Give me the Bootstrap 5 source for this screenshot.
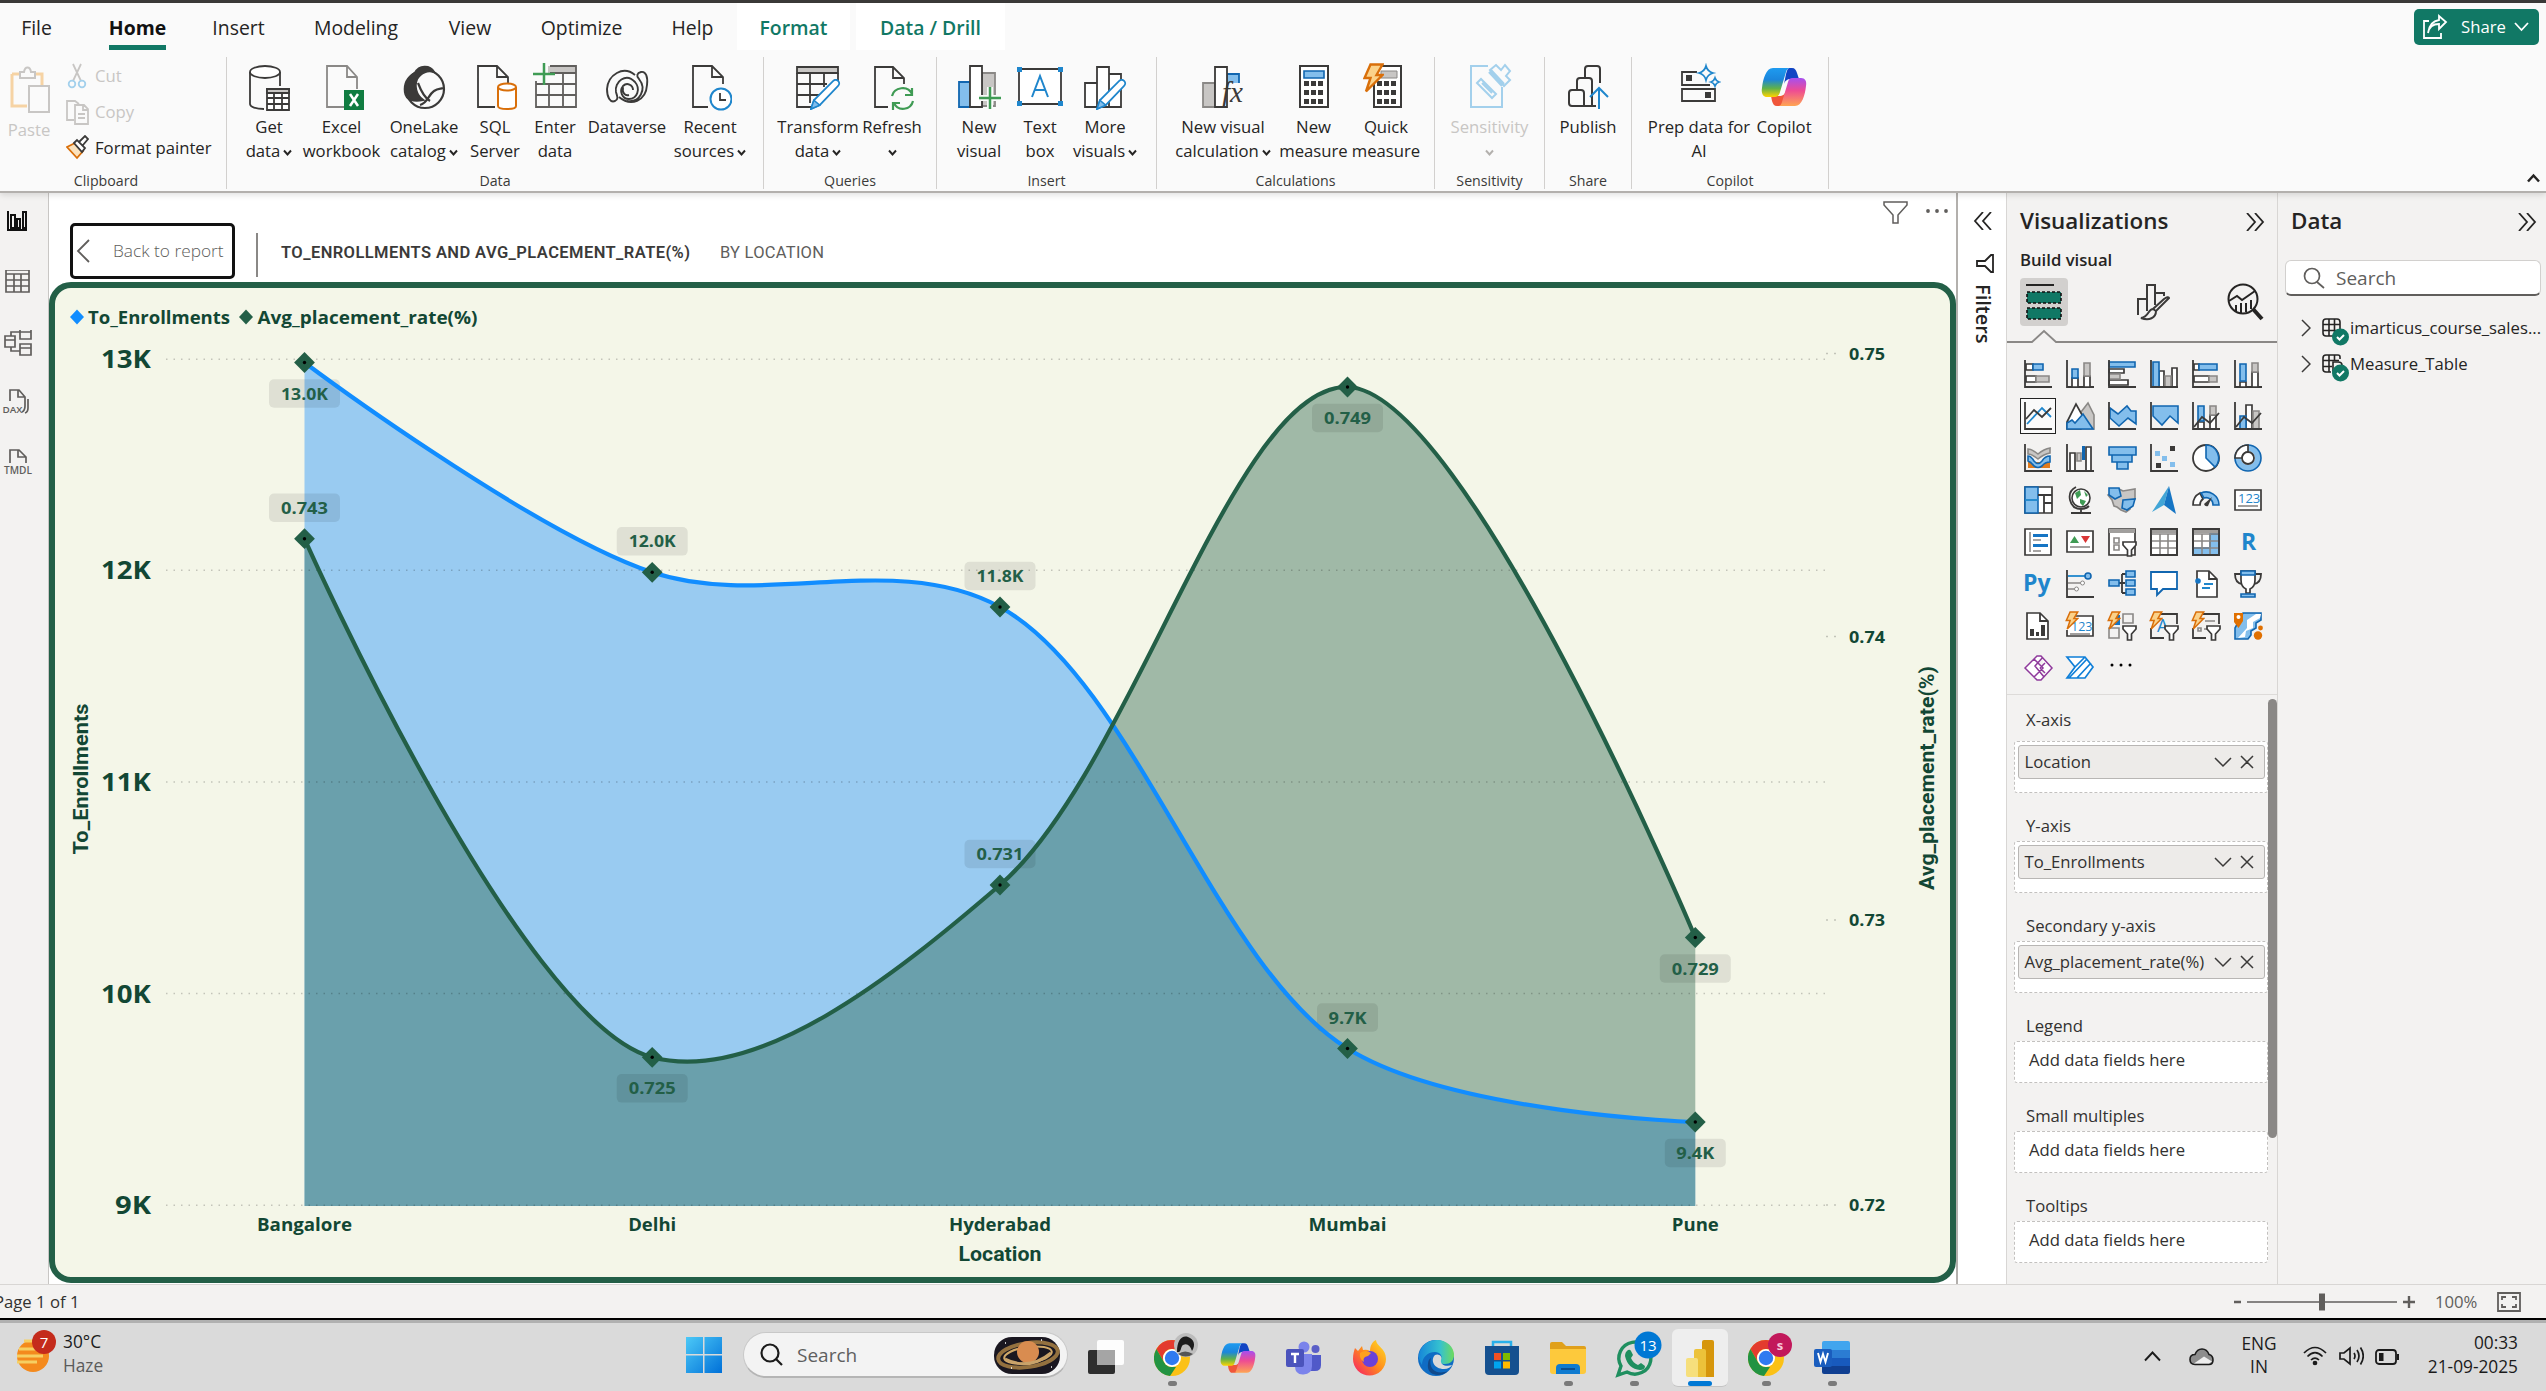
<!DOCTYPE html>
<html lang="en">
<head>
<meta charset="utf-8">
<title>Power BI Desktop</title>
<link href="https://cdn.jsdelivr.net/npm/bootstrap@5.3.0/dist/css/bootstrap.min.css" rel="stylesheet">
<style>
body{width:2546px;height:1391px;overflow:hidden;font-family:"Open Sans","Noto Sans",sans-serif;font-size:16.7px;line-height:24px;color:#252423;background:#f3f2f1}
svg{display:block;flex:none}
.hairline-top{height:3px;background:#3b3a39}
.ribbon{height:190px;background:#fafafa;border-bottom:2px solid #b3b0ad;z-index:2;box-shadow:0 2px 6px rgba(0,0,0,.12)}
.ribbon-tabs{height:47px;font-size:19.4px}
.rtab{height:47px;padding-top:13px;line-height:24px;white-space:nowrap;text-align:center}
.rtab.on{font-weight:700;border-bottom:5px solid #117865;color:#111}
.rtab.ctx{background:#fff;color:#117865;font-weight:600}
.share-btn{width:125px;height:36px;margin:6px 7px 0 0;background:#117865;color:#fff;border-radius:5px;font-size:16.7px}
.cmds{height:132px;margin-top:7px}
.grp{border-right:1.5px solid #d2d0ce;height:132px;text-align:center}
.grp-name{font-size:14.2px;line-height:16px;color:#3b3a39;padding-bottom:0}
.cmd{white-space:nowrap;line-height:24px;padding-top:6px}
.cmd svg.ic{margin:0 auto 4px}
.cv{display:inline-block;width:9px;height:7px;margin-left:3px}
.dim{color:#c8c6c4}
.clip-row{height:36px;gap:6px}
.rail{width:49px;border-right:1.5px solid #c8c6c4;padding-top:17px}
.canvas-area{width:1909px;background:#fff;border-right:2px solid #b3b0ad}
.focus-head{height:89px}
.back-btn{width:165px;height:56px;border:3px solid #111;border-radius:5px;margin:30px 0 0 21px;color:#605e5c;font-weight:300;font-size:17.3px}
.vbar{width:2px;height:44px;background:#8a8886;margin:40px 0 0 21px}
.chart-box{height:1001px;border:6px solid #235f47;border-radius:22px;background:#f4f6e8}
.filters-col{width:49px;background:#fff;border-right:1px solid #d8d6d4}
.filters-word{writing-mode:vertical-rl;font-size:20px;font-weight:600;line-height:26px;margin:10px 0 0 12px}
.viz-pane{width:271px;border-right:1px solid #d8d6d4}
.data-pane{width:268px}
.pane-title{font-size:22.4px;font-weight:600;height:57px;padding-top:0}
.mode-btn{width:48px;height:48px;border-radius:4px}
.mode-btn.on{background:#d2d0ce}
.icon-grid{display:grid;grid-template-columns:repeat(6,42px);grid-auto-rows:42px;padding:9px 0 0 10px;height:351px;border-bottom:1.5px solid #dddbd9}
.vcell{width:42px;height:42px;display:flex;align-items:center;justify-content:center}
.vcell.sel svg{outline:1.5px solid #222;outline-offset:3.5px;background:#fafafa;box-shadow:0 0 0 4px #fafafa}
.well-label{height:27px;margin:0 0 0 19px;line-height:24px;color:#323130}
.well{width:254px;margin-left:7px;border:1.5px dashed #c3c1bf;border-radius:3px;background:#fff;color:#323130}
.well.full{height:52px;padding:2.5px;margin-bottom:21px}
.well.empty-w{height:42px;padding:6px 0 0 14px;margin-bottom:21px}
.pill-f{height:34px;border:1.5px solid #b8b6b4;border-radius:3px;background:#edebe9;padding:0 5px 0 6px}
.thumb{width:9px;height:439px;border-radius:5px;background:#8a8886;right:0;top:4px}
.search-f{width:256px;height:36px;margin-left:7px;border:1.5px solid #d2d0ce;border-bottom:2px solid #605e5c;border-radius:6px;background:#fff;font-size:19px;color:#605e5c;padding-left:17px;gap:10px}
.tree-row{height:36px;padding-left:23px;white-space:nowrap}
.statusb{height:36px;border-top:1.5px solid #d8d6d4;border-bottom:2px solid #000;color:#605e5c}
.taskb{height:71px;background:#dadada;border-top:3px solid #b0b0b0;color:#1b1b1b}
.tsearch{width:325px;height:46px;border-radius:23px;background:#f3f3f3;border:1px solid #c8c8c8;border-bottom:2px solid #b5b5b5;font-size:19px;color:#5f5f5f}
.tapp{width:66px;height:58px;position:relative;display:flex;justify-content:center;align-items:center;padding-bottom:1px}
.tapp.run::after{content:"";position:absolute;bottom:1px;width:9px;height:5px;border-radius:3px;background:#7a7a7a}
.tapp.act::before{content:"";position:absolute;inset:0 5px;background:#eeeeee;border-radius:6px;border-bottom:1px solid #c4c4c4}
.tapp.act::after{width:24px;background:#0078d4}
.tapp svg{position:relative}
.tray{font-size:17.3px;line-height:24px}
</style>
</head>
<body class="d-flex flex-column m-0">
<svg width="0" height="0" class="position-absolute">
<defs>
<linearGradient id="cpa" x1="0" y1="0" x2="0" y2="1"><stop offset="0" stop-color="#1e9bf0"/><stop offset=".4" stop-color="#1b86dc"/><stop offset=".7" stop-color="#5fb14a"/><stop offset="1" stop-color="#ffd400"/></linearGradient>
<linearGradient id="cpb" x1="0" y1="0" x2="0" y2="1"><stop offset="0" stop-color="#a64ff0"/><stop offset=".45" stop-color="#ee4c93"/><stop offset="1" stop-color="#ffa552"/></linearGradient>
<linearGradient id="wing" x1="0" y1="0" x2="1" y2="1"><stop offset="0" stop-color="#4cc9f7"/><stop offset="1" stop-color="#0070d8"/></linearGradient>
<linearGradient id="edg" x1="0" y1="0" x2="1" y2="0"><stop offset="0" stop-color="#1687d9"/><stop offset=".6" stop-color="#35c1d0"/><stop offset="1" stop-color="#6edb5b"/></linearGradient>
<linearGradient id="ffx" x1="1" y1="0" x2="0" y2="1"><stop offset="0" stop-color="#ffe226"/><stop offset=".5" stop-color="#ff8a1c"/><stop offset="1" stop-color="#f5156c"/></linearGradient>
<symbol id="copilot" viewBox="0 0 46 40"><path d="M28 1h3c3 0 4 2 5 5l2 6h-8c-4 0-6 2-7 5l2-10c1-4 2-6 3-6z" fill="#1145c4"/><path d="M19 39h-3c-3 0-4-2-5-5l-1-5h8c4 0 6-2 7-5l-3 11c-1 3-1 4-3 4z" fill="#f0563a"/><path d="M12 1h17c-2 0-3 1-4 4l-6 20c-1 4-3 5-6 5H6c-4 0-6-4-5-9C2 12 5 1 12 1z" fill="url(#cpa)"/><path d="M34 39H17c2 0 3-1 4-4l6-20c1-4 3-4 6-4h7c4 0 6 3 5 8-1 9-4 20-11 20z" fill="url(#cpb)"/></symbol>
<symbol id="chrome" viewBox="0 0 36 36"><circle cx="18" cy="18" r="18" fill="#fbc116"/><path d="M18 0A18 18 0 0 1 33.6 9H18a9 9 0 0 0-7.8 13.5L2.4 9A18 18 0 0 1 18 0z" fill="#e33b2e"/><path d="M2.4 9l7.8 13.5A9 9 0 0 0 18 27h4l-6 9A18 18 0 0 1 2.4 9z" fill="#229342"/><circle cx="18" cy="18" r="9" fill="#fff"/><circle cx="18" cy="18" r="7.2" fill="#2f7af0"/></symbol>
<symbol id="chev" viewBox="0 0 9 7"><path d="M1 1.5l3.5 4 3.5-4" fill="none" stroke="currentColor" stroke-width="1.9"/></symbol>
<symbol id="dblR" viewBox="0 0 19 18"><path d="M1 0l8 9-8 9M9 0l8 9-8 9" fill="none" stroke="#252423" stroke-width="1.8"/></symbol>
<symbol id="bolt" viewBox="0 0 14 20"><path d="M5 1h8L9 8h4L2 19l3-9H1z" fill="#fbd28a" stroke="#d96f0a" stroke-width="1.6"/></symbol>
<symbol id="fun" viewBox="0 0 15 16"><path d="M1 1h13v3L9.500 9v6h-4V9L1 4z" fill="#fff" stroke="#3b3a39" stroke-width="1.7"/></symbol>
<symbol id="pencil" viewBox="0 0 32 32"><path d="M1 31l3-9L24 2c2-2 4-1 5 0s2 3 0 5L10 27z" fill="#fff" stroke="#1f86cc" stroke-width="1.8"/><path d="M1 31l3-9 6 5z" fill="#83beec" stroke="#1f86cc" stroke-width="1.5"/></symbol>
</defs>
</svg>

<div class="hairline-top"></div>
<header class="ribbon d-flex flex-column position-relative">
  <div class="ribbon-tabs d-flex">
    <div class="rtab" style="width:73px">File</div>
    <div class="d-flex justify-content-center" style="width:129px"><div class="rtab on">Home</div></div>
    <div class="rtab" style="width:73px">Insert</div>
    <div class="rtab" style="width:162px">Modeling</div>
    <div class="rtab" style="width:66px">View</div>
    <div class="rtab" style="width:157px">Optimize</div>
    <div class="rtab" style="width:65px">Help</div>
    <div class="rtab ctx" style="width:113px;margin-left:12px">Format</div>
    <div class="rtab ctx" style="width:149px;margin-left:6px">Data / Drill</div>
    <div class="share-btn ms-auto d-flex align-items-center ps-2">
      <svg width="26" height="26" viewBox="0 0 26 26" fill="none" stroke="#fff" stroke-width="1.8"><path d="M7 7H2v17h17v-5M6 19c1-6 5-9 11-9v5l7-7-7-6v4C10 7 7 12 6 19z"/></svg>
      <span style="margin-left:13px">Share</span>
      <svg class="ms-2" width="15" height="10" viewBox="0 0 15 10" fill="none" stroke="#fff" stroke-width="1.8"><path d="M1 1l6.500 7L14 1"/></svg>
    </div>
  </div>
  <div class="cmds d-flex">
    <div class="grp d-flex flex-column" style="width:227px">
      <div class="d-flex flex-grow-1">
        <div class="cmd dim" style="width:58px;padding-top:9px"><svg class="ic" width="44" height="48" viewBox="0 0 44 48" fill="none" stroke-width="2"><path d="M5 8h30v12M20 40H5V8" stroke="#f6d3a4" stroke-width="3"/><path d="M13 12V6h4c1-6 6-6 7 0h4v6z" fill="#fafafa" stroke="#c8c6c4"/><path d="M22 20h20v26H22z" fill="#fafafa" stroke="#c8c6c4"/></svg>Paste</div>
        <div class="ps-2" style="padding-top:1px">
          <div class="clip-row d-flex align-items-center dim"><svg width="23" height="26" viewBox="0 0 23 26" fill="none" stroke-width="1.8"><path d="M7 1l8 17M15 1L7 18" stroke="#c8c6c4"/><circle cx="6" cy="21" r="3.300" stroke="#a3d0ec"/><circle cx="16" cy="21" r="3.300" stroke="#a3d0ec"/></svg>Cut</div>
          <div class="clip-row d-flex align-items-center dim"><svg width="23" height="26" viewBox="0 0 23 26" fill="none" stroke="#c8c6c4" stroke-width="1.8"><path d="M8 21H1V2h8l4 3M9 6h9l4 4v15H9zM17 6v5h5M12 15h7M12 19h7"/></svg>Copy</div>
          <div class="clip-row d-flex align-items-center"><svg width="23" height="26" viewBox="0 0 23 26" fill="none" stroke-width="1.8"><path d="M1 12l8-4 8 8-6 7z" fill="#fbe2bd" stroke="#d96f0a"/><path d="M8 8l3-3 8 8-3 4zM13 7l6-6 3 3-5 6" stroke="#3b3a39" fill="#fff"/></svg>Format painter</div>
        </div>
      </div>
      <div class="grp-name" style="padding-right:14px">Clipboard</div>
    </div>

    <div class="grp d-flex flex-column" style="width:537px"><div class="d-flex flex-grow-1" style="padding-left:11px">
      <div class="cmd" style="width:62px"><svg class="ic" width="44" height="48" viewBox="0 0 44 48" fill="none" stroke="#3b3a39" stroke-width="1.8"><ellipse cx="18" cy="9" rx="15" ry="6" fill="#fff"/><path d="M3 9v32c0 3 6 5 14 5M33 9v14"/><path d="M20 26h22v21H20z" fill="#fff"/><path d="M20 26h22v4H20z" fill="#c8c6c4"/><path d="M20 35h22M20 41h22M27 30v17M35 30v17"/></svg>Get<br>data<svg class="cv"><use href="#chev"/></svg></div>
      <div class="cmd" style="width:83px"><svg class="ic" width="44" height="48" viewBox="0 0 44 48" fill="none" stroke="#8a8886" stroke-width="1.8"><path d="M24 44H7V3h20l10 11v12M27 3v11h10"/><path d="M24 27h20v20H24z" fill="#107c41" stroke="none"/><path d="M30 31l8 12M38 31l-8 12" stroke="#fff" stroke-width="2.500"/></svg>Excel<br>workbook</div>
      <div class="cmd" style="width:82px"><svg class="ic" width="44" height="48" viewBox="0 0 44 48" fill="none" stroke="#3b3a39" stroke-width="2.200"><ellipse cx="23" cy="26" rx="19" ry="19"/><path d="M13 10c4-8 15-8 19-1-6-2-13 0-17 7-3 7-1 16 6 21-9 2-17 0-18-8-1-8 3-15 10-19z" fill="#3b3a39"/><path d="M16 20c3 8 7 15 12 18M18 42c8-2 8-10 14-14 4-3 7-2 9-3"/></svg>OneLake<br>catalog<svg class="cv"><use href="#chev"/></svg></div>
      <div class="cmd" style="width:60px"><svg class="ic" width="44" height="48" viewBox="0 0 44 48" fill="none" stroke="#3b3a39" stroke-width="1.8"><path d="M22 44H5V3h19l11 11v6M24 3v11h11"/><path d="M25 24v19c0 4 18 4 18 0V24" fill="#fff" stroke="#d96f0a" stroke-width="2"/><ellipse cx="34" cy="24" rx="9" ry="3.500" fill="#fff" stroke="#d96f0a" stroke-width="2"/></svg>SQL<br>Server</div>
      <div class="cmd" style="width:60px"><svg class="ic" width="46" height="48" viewBox="0 0 46 48" fill="none" stroke="#605e5c" stroke-width="1.8"><path d="M16 3h28v7H16z" fill="#c8c6c4" stroke="none"/><path d="M18 3h26v41H4V18M4 21h40M4 32h40M17 21v23M31 10v34M18 10h26"/><path d="M12 0v22M1 11h22" stroke="#3f9b54" stroke-width="2.500"/></svg>Enter<br>data</div>
      <div class="cmd" style="width:84px"><svg class="ic" width="44" height="48" viewBox="0 0 44 48" fill="none" stroke="#3b3a39" stroke-width="1.9"><path d="M30 12C18 2 3 12 2 26c0 8 3 14 8 12 4-2 2-5 1-9-2-10 10-20 19-10 6 7 2 17-6 17-7 0-10-8-6-13 4-4 10-1 10 4M14 34c12 10 27 4 28-12 1-8-1-14-6-13-4 1-5 4-2 7 8 10 1 24-12 22M18 24c-1 6 2 9 6 8"/></svg>Dataverse</div>
      <div class="cmd" style="width:82px"><svg class="ic" width="44" height="48" viewBox="0 0 44 48" fill="none" stroke="#3b3a39" stroke-width="1.8"><path d="M20 44H5V3h19l11 11v7M24 3v11h11"/><circle cx="33" cy="36" r="10.500" stroke="#1f86cc" fill="#fff" stroke-width="2"/><path d="M32 30v7h6"/></svg>Recent<br>sources<svg class="cv"><use href="#chev"/></svg></div>
    </div><div class="grp-name">Data</div></div>

    <div class="grp d-flex flex-column" style="width:173px"><div class="d-flex flex-grow-1" style="padding-left:13px">
      <div class="cmd" style="width:82px"><svg class="ic" width="46" height="48" viewBox="0 0 46 48" fill="none" stroke="#3b3a39" stroke-width="1.8"><path d="M2 4h41v6H2z" fill="#c8c6c4"/><path d="M43 10v8M16 44H2V10M2 21h30M2 32h22M15 10v30M29 10v14"/><svg x="15" y="16" width="31" height="31"><use href="#pencil"/></svg></svg>Transform<br>data<svg class="cv"><use href="#chev"/></svg></div>
      <div class="cmd" style="width:66px"><svg class="ic" width="44" height="48" viewBox="0 0 44 48" fill="none" stroke="#3b3a39" stroke-width="1.8"><path d="M18 44H5V4h18l11 11v6M23 4v11h11"/><path d="M22 33c2-9 16-11 20-2M42 25v7h-7M43 38c-2 9-15 11-19 2M23 47v-7h7" stroke="#3f9b54" stroke-width="2.200"/></svg>Refresh<br><svg class="cv m-0"><use href="#chev"/></svg></div>
    </div><div class="grp-name">Queries</div></div>

    <div class="grp d-flex flex-column" style="width:220px"><div class="d-flex flex-grow-1" style="padding-left:11px">
      <div class="cmd" style="width:62px"><svg class="ic" width="44" height="48" viewBox="0 0 44 48" fill="none" stroke="#3b3a39" stroke-width="1.8"><path d="M25 10h13v33H25z" fill="#c8c6c4" stroke="#8a8886"/><path d="M2 19h11v25H2z" fill="#83beec" stroke="#1166b0"/><path d="M13 3h12v41H13z" fill="#fff"/><path d="M33 24v22M22 35h22" stroke="#fafafa" stroke-width="6"/><path d="M33 24v22M22 35h22" stroke="#3f9b54" stroke-width="2.500"/></svg>New<br>visual</div>
      <div class="cmd" style="width:60px"><svg class="ic" width="48" height="48" viewBox="0 0 48 48"><path d="M3 6h42v35H3z" fill="#fff" stroke="#3b3a39" stroke-width="1.8"/><path d="M1 4h5v5H1zM42 4h5v5h-5zM1 38h5v5H1zM42 38h5v5h-5z" fill="#1f86cc"/><path d="M16 34l8-21 8 21M19 27h10" fill="none" stroke="#1f86cc" stroke-width="2"/></svg>Text<br>box</div>
      <div class="cmd" style="width:70px"><svg class="ic" width="44" height="48" viewBox="0 0 44 48" fill="none" stroke="#3b3a39" stroke-width="1.8"><path d="M2 20h12v24H2zM14 4h12v40H14zM26 11h12v33H26z" fill="#fff"/><svg x="13" y="16" width="31" height="31"><use href="#pencil"/></svg></svg>More<br>visuals<svg class="cv"><use href="#chev"/></svg></div>
    </div><div class="grp-name">Insert</div></div>

    <div class="grp d-flex flex-column" style="width:278px"><div class="d-flex flex-grow-1" style="padding-left:13px">
      <div class="cmd" style="width:106px"><svg class="ic" width="44" height="48" viewBox="0 0 44 48" fill="none" stroke="#3b3a39" stroke-width="1.8"><path d="M2 20h12v24H2z" fill="#c8c6c4" stroke="#8a8886"/><path d="M26 11h12v14H26z" fill="#83beec" stroke="#1166b0"/><path d="M14 4h12v40H14z" fill="#fff"/><path d="M27 20h18v26H27z" fill="#fafafa" stroke="none"/><text x="21" y="39" font-family="Liberation Serif" font-style="italic" font-size="29" fill="#3b3a39" stroke="none">fx</text></svg>New visual<br>calculation<svg class="cv"><use href="#chev"/></svg></div>
      <div class="cmd" style="width:75px"><svg class="ic" width="32" height="48" viewBox="0 0 32 48"><path d="M2 3h28v41H2z" fill="#fff" stroke="#3b3a39" stroke-width="2"/><path d="M6 8h20v7H6z" fill="#83beec" stroke="#1166b0" stroke-width="1.6"/><path d="M6 18h5v5H6zM13 18h5v5h-5zM20 18h5v5h-5zM6 27h5v5H6zM13 27h5v5h-5zM20 27h5v5h-5zM6 36h5v5H6zM13 36h5v5h-5zM20 36h5v5h-5z" fill="#3b3a39"/></svg>New<br>measure</div>
      <div class="cmd" style="width:70px"><svg class="ic" width="46" height="48" viewBox="0 0 46 48"><path d="M14 3h24v41H11V20" fill="#fff" stroke="#3b3a39" stroke-width="2"/><path d="M18 8h16v7H18z" fill="#c8c6c4" stroke="#8a8886"/><path d="M14 18h5v5h-5zM21 18h5v5h-5zM28 18h5v5h-5zM14 27h5v5h-5zM21 27h5v5h-5zM28 27h5v5h-5zM14 36h5v5h-5zM21 36h5v5h-5zM28 36h5v5h-5z" fill="#3b3a39"/><svg x="0" y="0" width="21" height="30"><use href="#bolt"/></svg></svg>Quick<br>measure</div>
    </div><div class="grp-name">Calculations</div></div>

    <div class="grp d-flex flex-column" style="width:110px"><div class="cmd dim flex-grow-1"><svg class="ic" width="44" height="48" viewBox="0 0 44 48" fill="none" stroke="#a3d0ec" stroke-width="2"><path d="M20 3H3v41h31V24"/><path d="M9 20l4-4 15 15-4 4zM14 20l10 10M22 7l6-5 5 5 4-5 5 6-4 5 4 4-6 6z"/><path d="M22 8l13 14" stroke-width="5"/></svg>Sensitivity<br><svg class="cv m-0" style="color:#b3b0ad"><use href="#chev"/></svg></div><div class="grp-name">Sensitivity</div></div>

    <div class="grp d-flex flex-column" style="width:87px"><div class="cmd flex-grow-1"><svg class="ic" width="44" height="48" viewBox="0 0 44 48" fill="none" stroke="#3b3a39" stroke-width="2"><path d="M34 20V6q0-3-3-3h-9q-3 0-3 3v9M11 27V18q0-3 3-3h9q3 0 3 3v25M6 27h9q3 0 3 3v13H6q-3 0-3-3V30q0-3 3-3zM18 43h12"/><path d="M33 46V25M24 34l9-9 9 9" stroke="#1f86cc"/></svg>Publish</div><div class="grp-name">Share</div></div>

    <div class="grp d-flex flex-column" style="width:197px"><div class="d-flex flex-grow-1" style="padding-left:13px">
      <div class="cmd" style="width:108px"><svg class="ic" width="44" height="48" viewBox="0 0 44 48" fill="none" stroke="#3b3a39" stroke-width="1.8"><path d="M20 9H5v13h28M5 26h33v12H5z"/><path d="M9 12h6v6H9zM28 29h6v6h-6z" fill="#3b3a39" stroke="none"/><path d="M29 3q1.500 5.500 7 7-5.500 1.500-7 7-1.500-5.500-7-7 5.500-1.500 7-7zM38 15q1 3 4 4-3 1-4 4-1-3-4-4 3-1 4-4z" stroke="#1f86cc"/></svg>Prep data for<br>AI</div>
      <div class="cmd" style="width:62px"><svg class="ic" width="46" height="48" viewBox="0 0 46 48"><svg y="4" width="46" height="40"><use href="#copilot"/></svg></svg>Copilot</div>
    </div><div class="grp-name">Copilot</div></div>
    <div class="ms-auto align-self-end" style="padding:0 6px 6px 0"><svg width="13" height="10" viewBox="0 0 13 10"><path d="M1 8.500l5.500-6 5.500 6" fill="none" stroke="#252423" stroke-width="2.500"/></svg></div>
  </div>
</header>

<main class="d-flex" style="height:1091px">
  <nav class="rail d-flex flex-column">
    <svg width="48" height="60" viewBox="0 0 48 60" fill="none" stroke="#111" stroke-width="2"><path d="M8 1v19h19M11 5h4v13h-4zM17 9h3v9h-3zM23 2h3v16h-3z"/></svg>
    <svg width="48" height="60" viewBox="0 0 48 60" fill="none" stroke="#605e5c" stroke-width="1.7"><path d="M6 0h23v22H6zM6 4h23M6 10h23M6 16h23M14 4v18M21 4v18"/></svg>
    <svg width="48" height="60" viewBox="0 0 48 60" fill="none" stroke="#605e5c" stroke-width="1.7"><path d="M5 6h10v11H5zM5 10h10M20-2h11v11H20zM20 2h11M20 14h11v11H20zM20 18h11M11 6V2h9M11 17v4h9"/></svg>
    <svg width="48" height="60" viewBox="0 0 48 60" fill="none" stroke="#605e5c" stroke-width="1.7" overflow="visible"><path d="M10 11V0h9l6 7v9c0 3-1 5-3 6M18 0v7h7M28 9v9q0 4-3 5"/><text x="2.500" y="23" font-size="9.500" fill="#605e5c" stroke="none" font-weight="600" textLength="20" lengthAdjust="spacingAndGlyphs">DAX</text></svg>
    <svg width="48" height="60" viewBox="0 0 48 60" fill="none" stroke="#605e5c" stroke-width="1.7" overflow="visible"><path d="M10 13V0h9l7 7v6M18 0v7h8"/><text x="4" y="24" font-size="10" fill="#605e5c" stroke="none" font-weight="600" textLength="28" lengthAdjust="spacingAndGlyphs">TMDL</text></svg>
  </nav>

  <section class="canvas-area">
    <div class="focus-head d-flex">
      <div class="back-btn d-flex align-items-center"><svg style="margin-left:3px" width="14" height="24" viewBox="0 0 14 24"><path d="M13 1L2 12l11 11" fill="none" stroke="#605e5c" stroke-width="1.8"/></svg><span class="text-nowrap" style="margin-left:23px">Back to report</span></div>
      <div class="vbar"></div>
      <svg style="margin:46px 0 0 22px" width="560" height="30" font-family="Roboto" font-size="16.500"><text x="1" y="19" font-weight="600" fill="#3b3a39" textLength="409">TO_ENROLLMENTS AND AVG_PLACEMENT_RATE(%)</text><text x="440" y="19" fill="#605e5c" textLength="104">BY LOCATION</text></svg>
      <svg class="ms-auto" style="margin-top:8px;margin-right:6px" width="68" height="24" viewBox="0 0 68 24"><path d="M2 1h23v3l-9 10v8h-5v-8L2 4z" fill="none" stroke="#605e5c" stroke-width="1.5"/><circle cx="46" cy="10" r="1.900" fill="#605e5c"/><circle cx="55" cy="10" r="1.900" fill="#605e5c"/><circle cx="64" cy="10" r="1.900" fill="#605e5c"/></svg>
    </div>
    <div class="chart-box"><svg id="chart" width="1895" height="989" viewBox="55 288 1895 989" font-family="Open Sans" font-weight="600"></svg></div>
  </section>

  <aside class="filters-col">
    <svg style="margin:19px 0 0 15px" width="19" height="18" viewBox="0 0 19 18"><path d="M10 0L2 9l8 9M18 0l-8 9 8 9" fill="none" stroke="#252423" stroke-width="1.8"/></svg>
    <svg style="margin:24px 0 0 18px" width="19" height="20" viewBox="0 0 19 20"><path d="M17 1v17h-2L9 12H1V7h8l6-6z" fill="none" stroke="#252423" stroke-width="1.8"/></svg>
    <div class="filters-word">Filters</div>
  </aside>

  <aside class="viz-pane position-relative">
    <div class="d-flex justify-content-between pane-title" style="padding:16px 12px 0 13px"><span>Visualizations</span><svg class="mt-1" width="19" height="18"><use href="#dblR"/></svg></div>
    <div class="fw-semibold" style="padding:0 0 0 13px;height:28px;margin-top:-3px;padding-top:1px">Build visual</div>
    <div class="d-flex align-items-center justify-content-between" style="padding:3px 13px 0 13px">
      <div class="mode-btn on d-flex justify-content-center align-items-center"><svg width="36" height="38" viewBox="0 0 36 38"><path d="M0 2h28" stroke="#252423" stroke-width="2"/><path d="M1 9h34v11H1zM1 25h34v11H1z" fill="#117865" stroke="#111" stroke-width="1.600" stroke-dasharray="3 2"/></svg></div>
      <svg style="margin-left:10px" width="34" height="38" viewBox="0 0 34 38" fill="none" stroke="#3b3a39" stroke-width="2"><path d="M2 32V16h8M11 28V2h8v20M19 10h9v3M33 15L20 28l-3-2 11-10q4-3 5-1zM17 26c-5 0-4 8-12 9 8 3 15 0 15-7"/></svg>
      <svg width="37" height="38" viewBox="0 0 37 38" fill="none" stroke="#252423" stroke-width="2"><circle cx="16" cy="16" r="14.500"/><path d="M2 18l8-5 5 4L28 8M9 22v6M14 20v10M19 20v9M24 17v9"/><path d="M26 26l9 10" stroke-width="4"/></svg>
    </div>
    <svg width="270" height="16" viewBox="0 0 270 16" style="margin-top:2px"><path d="M0 14h25L37 3l12 11h221" fill="none" stroke="#8a8886" stroke-width="1.8"/></svg>
    <div class="icon-grid" id="icons"></div>
    <div class="position-relative" style="padding-top:13px">
      <div class="position-absolute thumb"></div>
      <div class="well-label" style="height:33px">X-axis</div>
      <div class="well full"><div class="pill-f d-flex align-items-center">Location<svg class="ms-auto" width="50" height="18" viewBox="0 0 50 18" fill="none" stroke="#3b3a39" stroke-width="1.500"><path d="M6 5l8 8 8-8M32 3l12 12M44 3L32 15"/></svg></div></div>
      <div class="well-label">Y-axis</div>
      <div class="well full"><div class="pill-f d-flex align-items-center">To_Enrollments<svg class="ms-auto" width="50" height="18" viewBox="0 0 50 18" fill="none" stroke="#3b3a39" stroke-width="1.500"><path d="M6 5l8 8 8-8M32 3l12 12M44 3L32 15"/></svg></div></div>
      <div class="well-label">Secondary y-axis</div>
      <div class="well full"><div class="pill-f d-flex align-items-center">Avg_placement_rate(%)<svg class="ms-auto" width="50" height="18" viewBox="0 0 50 18" fill="none" stroke="#3b3a39" stroke-width="1.500"><path d="M6 5l8 8 8-8M32 3l12 12M44 3L32 15"/></svg></div></div>
      <div class="well-label">Legend</div><div class="well empty-w">Add data fields here</div>
      <div class="well-label">Small multiples</div><div class="well empty-w">Add data fields here</div>
      <div class="well-label">Tooltips</div><div class="well empty-w">Add data fields here</div>
    </div>
  </aside>

  <aside class="data-pane">
    <div class="d-flex justify-content-between pane-title" style="padding:16px 9px 0 13px;height:67px"><span>Data</span><svg class="mt-1" width="19" height="18"><use href="#dblR"/></svg></div>
    <div class="search-f d-flex align-items-center"><svg width="23" height="22" viewBox="0 0 23 22" fill="none" stroke="#605e5c" stroke-width="1.700"><circle cx="9" cy="9" r="7.500"/><path d="M14 15l7 6"/></svg>Search</div>
    <div style="height:14px"></div>
    <div class="tree-row d-flex align-items-center"><svg width="10" height="18" viewBox="0 0 10 18"><path d="M1 1l8 8-8 8" fill="none" stroke="#3b3a39" stroke-width="1.500"/></svg><svg style="margin:6px 0 0 11px" width="28" height="30" viewBox="0 0 28 30" fill="none" stroke="#252423" stroke-width="1.600"><rect x="1" y="3" width="17" height="17" rx="3"/><path d="M1 8.500h17M1 14.500h17M7 3v17M12.500 3v17"/><circle cx="18.500" cy="21" r="8.500" fill="#117865" stroke="none"/><path d="M15 21l2.500 2.500 4.500-4.500" stroke="#fff" stroke-width="2"/></svg>imarticus_course_sales...</div>
    <div class="tree-row d-flex align-items-center"><svg width="10" height="18" viewBox="0 0 10 18"><path d="M1 1l8 8-8 8" fill="none" stroke="#3b3a39" stroke-width="1.500"/></svg><svg style="margin:6px 0 0 11px" width="28" height="30" viewBox="0 0 28 30" fill="none" stroke="#252423" stroke-width="1.600"><path d="M18 7V5q0-2-2-2H4Q1 3 1 6v11q0 3 3 3h5M1 8.500h16M1 14.500h9M7 3v17M12.500 3v5"/><path d="M11 10h5q4 0 4 3v6h-9z" fill="#f3f2f1"/><circle cx="18.500" cy="21" r="8.500" fill="#117865" stroke="none"/><path d="M15 21l2.500 2.500 4.500-4.500" stroke="#fff" stroke-width="2"/></svg>Measure_Table</div>
  </aside>
</main>

<footer class="statusb d-flex align-items-center">
  <span style="margin-left:-6px;color:#323130">Page 1 of 1</span>
  <svg class="ms-auto" width="190" height="20" viewBox="0 0 190 20" stroke="#605e5c" fill="none"><path d="M2 10h7M171 10h12M177 4v12" stroke-width="2.400"/><path d="M15 10h150" stroke-width="1.500"/><path d="M90 1.500v17" stroke-width="6"/></svg>
  <span style="margin-left:13px;width:62px">100%</span>
  <svg style="margin-right:25px" width="24" height="20" viewBox="0 0 24 20" fill="none" stroke="#605e5c" stroke-width="1.800"><path d="M1 1h22v18H1zM5 8V5h4M15 5h4v3M19 12v3h-4M9 15H5v-3"/></svg>
</footer>

<div class="taskb d-flex">
  <div class="d-flex tray" style="width:686px;padding:6px 0 0 16px">
    <svg width="47" height="48" viewBox="0 0 47 48"><circle cx="17" cy="27" r="16" fill="#f48a1d"/><path d="M8 12h13M3 20h22M1 27h26M1 33h20" stroke="#f6cf62" stroke-width="3"/><circle cx="28" cy="13" r="12" fill="#c42b1c"/><text x="28" y="18.500" font-size="15" fill="#fff" text-anchor="middle">7</text></svg>
    <div class="lh-sm" style="padding-top:1px"><div style="line-height:24px">30°C</div><div style="line-height:24px;color:#5a5a5a">Haze</div></div>
  </div>
  <svg style="margin-top:14px" width="36" height="36" viewBox="0 0 36 36"><path d="M0 0h17v17H0zM18.500 0H36v17H18.500zM0 18.500h17V36H0zM18.500 18.500H36V36H18.500z" fill="url(#wing)"/></svg>
  <div class="tsearch d-flex align-items-center" style="margin:9px 5px 0 21px;padding-left:15px">
    <svg width="24" height="24" viewBox="0 0 24 24" fill="none" stroke="#1b1b1b" stroke-width="2.200"><circle cx="11" cy="10" r="8.500"/><path d="M17 16l6 6"/></svg><span style="margin-left:14px">Search</span>
    <svg class="ms-auto me-1" width="70" height="40" viewBox="0 0 70 40"><rect x="1" y="2" width="66" height="37" rx="18" fill="#1a1720"/><ellipse cx="35" cy="20" rx="30" ry="12" fill="none" stroke="#94713f" stroke-width="4" transform="rotate(-8 35 20)"/><ellipse cx="35" cy="20" rx="24" ry="8" fill="none" stroke="#d0a868" stroke-width="2" transform="rotate(-8 35 20)"/><circle cx="35" cy="17" r="11" fill="#d98c50"/><path d="M12 24q24 12 46-6" stroke="#c9a36a" stroke-width="3" fill="none"/><path d="M12 8h1M58 32h1M18 33h1M48 5h1" stroke="#fff" stroke-width="1.500"/></svg>
  </div>
  <div class="d-flex" style="margin-top:6px">
    <div class="tapp"><svg width="36" height="36" viewBox="0 0 36 36"><rect x="0" y="10" width="27" height="24" rx="2" fill="#2e2e2e"/><rect x="9" y="0" width="27" height="25" rx="2" fill="#fff" opacity=".93"/><rect x="9" y="10" width="18" height="15" fill="#a5a5a5"/></svg></div>
    <div class="tapp run"><svg width="46" height="44" viewBox="0 0 46 44" overflow="visible"><svg x="5" y="4" width="36" height="36"><use href="#chrome"/></svg><circle cx="37" cy="9" r="12" fill="#bdbdbd"/><path d="M28 16c0-12 5-17 11-15s8 8 4 14c-2-6-5-8-9-6-3 2-1 8-6 7z" fill="#1d1d1d"/><path d="M29 18q7-5 15 0-7 5-15 0z" fill="#555"/></svg></div>
    <div class="tapp"><svg width="36" height="34"><use href="#copilot"/></svg></div>
    <div class="tapp"><svg width="36" height="34" viewBox="0 0 36 34"><circle cx="29.500" cy="8" r="4" fill="#5b5fc7"/><path d="M24 14h11v10q0 6-6 6h-5z" fill="#5059c9"/><circle cx="18" cy="6" r="5.500" fill="#7b83eb"/><path d="M9 13h17v12q0 8-8.500 8.500T9 25z" fill="#7b83eb"/><rect y="8" width="18" height="18" rx="2" fill="#4b53bc"/><path d="M5 13h8M9 13v9" stroke="#fff" stroke-width="2.400"/></svg></div>
    <div class="tapp"><svg width="36" height="36" viewBox="0 0 36 36"><path d="M3 8l3 3 4-5 1 4q4-1 7 1c0-5 2-9 6-11 0 6 10 8 10 19a16.500 16.500 0 0 1-33 0c0-5 1-8 2-11z" fill="url(#ffx)"/><circle cx="18" cy="19" r="8" fill="#6a41d8"/><path d="M8 13q6-4 11 0l-3 3q-6 1-4 6-5-3-4-9z" fill="#ffa01e"/></svg></div>
    <div class="tapp"><svg width="36" height="36" viewBox="0 0 36 36"><circle cx="18" cy="18" r="18" fill="#0f6cc4"/><path d="M1 14C4 4 11 0 19 0c10 0 17 7 17 15 0 6-4 9-9 9-4 0-6-1-4-4 2-4-1-8-6-8-8 0-13 6-13 13Q0 19 1 14z" fill="url(#edg)"/><path d="M13 18c-3 9 4 18 17 13-7 7-22 5-20-7 0-3 1-5 3-6z" fill="#114a8b"/><path d="M17 15c-5 5-1 14 9 14 4 0 7-2 8-4-6 2-12 0-11-5 2-3-2-7-6-5z" fill="#dadada"/></svg></div>
    <div class="tapp"><svg width="36" height="36" viewBox="0 0 36 36"><path d="M9 8V2h18v6" fill="none" stroke="#28afea" stroke-width="2.500"/><path d="M1 6h34v25q0 4-4 4H5q-4 0-4-4z" fill="#15508f"/><path d="M10 13h7v7h-7z" fill="#f25022"/><path d="M19 13h7v7h-7z" fill="#7fba00"/><path d="M10 21.500h7v7h-7z" fill="#00a4ef"/><path d="M19 21.500h7v7h-7z" fill="#ffb900"/></svg></div>
    <div class="tapp run"><svg width="36" height="34" viewBox="0 0 36 34"><path d="M0 3q0-2 2-2h10l4 4h18q2 0 2 2v10H0z" fill="#e0a01b"/><path d="M0 8h36v22q0 3-3 3H3q-3 0-3-3z" fill="#fdc93c"/><path d="M6 33v-6q0-4 4-4h16q4 0 4 4v6z" fill="#0f7bd0"/><path d="M11 28h14" stroke="#0a4f93" stroke-width="2"/></svg></div>
    <div class="tapp run"><svg width="46" height="44" viewBox="0 0 46 44" overflow="visible"><path d="M7 39l3-9a16 16 0 1 1 6 6z" fill="none" stroke="#1f8f5f" stroke-width="3.400"/><path d="M17 14q2-1 3 1l2 4-2 3q2 5 7 7l3-2 4 3q0 4-5 4-12-1-15-14 0-4 3-6z" fill="#1f8f5f"/><circle cx="37" cy="9" r="13.500" fill="#0078d4"/><text x="37" y="14.500" font-size="15" fill="#fff" text-anchor="middle">13</text></svg></div>
    <div class="tapp run act"><svg width="28" height="38" viewBox="0 0 28 38"><path d="M16 3q0-2 2-2h8q2 0 2 2v35H16z" fill="#d6960c"/><path d="M8 12q0-2 2-2h8q2 0 2 2v26H8z" fill="#ecc23a"/><path d="M0 21q0-2 2-2h8q2 0 2 2v17H2q-2 0-2-2z" fill="#f6df7c"/></svg></div>
    <div class="tapp run"><svg width="46" height="44" viewBox="0 0 46 44" overflow="visible"><svg x="5" y="4" width="36" height="36"><use href="#chrome"/></svg><circle cx="37" cy="9" r="12" fill="#c2185b"/><text x="37" y="14" font-size="13" fill="#f7c9da" font-weight="700" text-anchor="middle">s</text></svg></div>
    <div class="tapp run"><svg width="36" height="34" viewBox="0 0 36 34"><path d="M8 2q0-2 2-2h24q2 0 2 2v7H8z" fill="#41a5ee"/><path d="M8 9h28v8H8z" fill="#2b7cd3"/><path d="M8 17h28v8H8z" fill="#185abd"/><path d="M8 25h28v6q0 2-2 2H10q-2 0-2-2z" fill="#103f91"/><rect y="8" width="18" height="18" rx="2" fill="#1a5dbe"/><path d="M4 12l2.500 9L9 13l2.500 8L14 12" fill="none" stroke="#fff" stroke-width="1.900"/></svg></div>
  </div>
  <div class="d-flex ms-auto tray align-items-start" style="padding-top:8px;margin-right:28px">
    <svg style="margin-top:20px" width="17" height="11" viewBox="0 0 17 11"><path d="M1 9.500L8.500 1.500 16 9.500" fill="none" stroke="#1b1b1b" stroke-width="1.900"/></svg>
    <svg style="margin:17px 0 0 28px" width="25" height="18" viewBox="0 0 25 18"><path d="M6 16.500q-5 0-5-5t5-5q2-5.500 7-5.500 5 0 7 5.500 4 1 4 5.500t-4 4.500z" fill="#8d8d8d" stroke="#1b1b1b" stroke-width="1.600"/><path d="M5 15.500l10-7 8 5-3 2z" fill="#eee"/></svg>
    <div class="text-center" style="margin:1px 0 0 26px;line-height:23px;width:38px">ENG<br>IN</div>
    <svg style="margin:15px 0 0 25px" width="24" height="20" viewBox="0 0 24 20" fill="none" stroke="#1b1b1b" stroke-width="1.700"><path d="M1 7q11-11 22 0M4.500 10.500q7.500-7.500 15 0M8 14q4-4 8 0"/><circle cx="12" cy="17" r="1.500" fill="#1b1b1b"/></svg>
    <svg style="margin:15px 0 0 12px" width="25" height="20" viewBox="0 0 25 20" fill="none" stroke="#1b1b1b" stroke-width="1.700"><path d="M1 7h4l6-5v16l-6-5H1zM15 7q2 3 0 6M18 4q4 6 0 12M21.500 1.500q5.500 8.500 0 17"/></svg>
    <svg style="margin:18px 0 0 11px" width="25" height="16" viewBox="0 0 25 16"><rect x="1" y="1" width="20" height="14" rx="3" fill="none" stroke="#1b1b1b" stroke-width="1.800"/><rect x="4" y="4" width="4.500" height="8" fill="#1b1b1b"/><path d="M23 5v6" stroke="#1b1b1b" stroke-width="2"/></svg>
    <div class="text-end" style="width:118px">00:33<br>21-09-2025</div>
  </div>
</div>

<script src="https://cdn.jsdelivr.net/npm/bootstrap@5.3.0/dist/js/bootstrap.bundle.min.js"></script>
<script>
// Combo chart: two smoothed area series over five locations
const xs=[304.5,652.2,1000,1347.500,1695.300], base=1206;
const enroll={y:[362.500,572.300,607,1048.500,1122],lab:['13.0K','12.0K','11.8K','9.7K','9.4K'],dir:[1,-1,-1,-1,1],c:'#118DFF'};
const rate={y:[538.700,1057.300,885,387,937.500],lab:['0.743','0.725','0.731','0.749','0.729'],dir:[-1,1,-1,1,1],c:'#235f47'};
function smooth(ys){
  const P=xs.map((x,i)=>[x,ys[i]]), d=i=>Math.sqrt(Math.hypot(P[i+1][0]-P[i][0],P[i+1][1]-P[i][1]));
  const tan=i=>[0,1].map(k=>(P[i][k]-P[i-1][k])/d(i-1)-(P[i+1][k]-P[i-1][k])/(d(i-1)+d(i))+(P[i+1][k]-P[i][k])/d(i));
  let s=`M${P[0]}`;
  for(let i=0;i<P.length-1;i++){
    const a=i?tan(i).map((m,k)=>P[i][k]+m*d(i)/3):P[i];
    const b=i<P.length-2?tan(i+1).map((m,k)=>P[i+1][k]-m*d(i)/3):P[i+1];
    s+=`C${a} ${b} ${P[i+1]}`;
  }
  return s;
}
let o='';
const T=(x,y,t,w,sz,extra='')=>`<text x="${x}" y="${y}" font-size="${sz}" textLength="${w}" lengthAdjust="spacingAndGlyphs" fill="#124734" ${extra}>${t}</text>`;
[enroll,rate].forEach(s=>o+=`<path d="${smooth(s.y)}L${xs[4]} ${base}L${xs[0]} ${base}Z" fill="${s.c}" fill-opacity=".4"/>`);
[359.300,570.300,782,993.500,1205.200].forEach((y,i)=>{
  o+=`<path d="M166 ${y}H1830" stroke="#000" stroke-opacity=".2" stroke-width="1.500" stroke-dasharray="1.500 6"/>`;
  const w=[50,50,50,50,36][i];
  o+=T(151-w,y+9,[13,12,11,10,9][i]+'K',w,25.500,'font-weight="700"');
});
[[353.500,'0.75'],[636.500,'0.74'],[920,'0.73'],[1205,'0.72']].forEach(([y,t])=>{
  o+=`<path d="M1826 ${y}h11" stroke="#000" stroke-opacity=".2" stroke-width="1.500" stroke-dasharray="2 6"/>`+T(1849,y+6,t,36,16.500,'font-weight="700"');
});
[enroll,rate].forEach(s=>s.lab.forEach((t,i)=>{
  const w=t.length<5?61:71,y=s.y[i]+31*s.dir[i],tw=t.length<5?38:47;
  o+=`<rect x="${xs[i]-w/2}" y="${y-14.200}" width="${w}" height="28.500" rx="5" fill="#000" fill-opacity=".085"/><text x="${xs[i]}" y="${y+6}" font-size="16.700" font-weight="700" text-anchor="middle" fill="#235f47" textLength="${tw}" lengthAdjust="spacingAndGlyphs">${t}</text>`;
}));
[enroll,rate].forEach(s=>o+=`<path d="${smooth(s.y)}" fill="none" stroke="${s.c}" stroke-width="4.200"/>`);
[enroll,rate].forEach(s=>s.y.forEach((y,i)=>o+=`<path d="M${xs[i]-10.400} ${y}l10.400-10.400 10.400 10.400-10.400 10.400z" fill="#235f47"/><circle cx="${xs[i]}" cy="${y}" r="1.700"/>`));
[['Bangalore',95],['Delhi',48],['Hyderabad',102],['Mumbai',78],['Pune',47]].forEach(([t,w],i)=>o+=T(xs[i],1231,t,w,18,'font-weight="700" text-anchor="middle"'));
o+=T(1000,1261,'Location',83,20,'font-family="Roboto" font-weight="700" text-anchor="middle"');
o+=T(0,0,'To_Enrollments',151,20,'font-family="Roboto" font-weight="700" text-anchor="middle" transform="translate(88 779) rotate(-90)"');
o+=T(0,0,'Avg_placement_rate(%)',224,20,'font-family="Roboto" font-weight="700" text-anchor="middle" transform="translate(1934 778) rotate(-90)"');
o+='<path d="M70 317l7-7.500 7 7.500-7 7.500z" fill="#118DFF"/><path d="M239 317l7-7.500 7 7.500-7 7.500z" fill="#235f47"/>';
o+=T(88,324,'To_Enrollments',142,18,'font-weight="700"')+T(257.500,324,'Avg_placement_rate(%)',220,18,'font-weight="700"');
document.getElementById('chart').innerHTML=o;

// Visual type gallery. Shorthands: K dark stroke, B blue fill, G grey fill, W white fill
const p=(d,c)=>({K:`<path d="${d}" fill="none" stroke="#3b3a39" stroke-width="1.800"/>`,B:`<path d="${d}" fill="#83beec" stroke="#1166b0" stroke-width="1.600"/>`,G:`<path d="${d}" fill="#c8c6c4" stroke="#8a8886" stroke-width="1.600"/>`,W:`<path d="${d}" fill="#fff" stroke="#3b3a39" stroke-width="1.700"/>`,N:`<path d="${d}" fill="none" stroke="#1f86cc" stroke-width="1.800"/>`,g:`<path d="${d}" fill="none" stroke="#8a8886" stroke-width="1.600"/>`}[c]||`<path d="${d}" fill="${c}"/>`);
const ax=p('M1 0v27h27','K'), bolt='<svg x="-1" y="-1" width="14" height="19"><use href="#bolt"/></svg>', fun='<svg x="14" y="13" width="15" height="16"><use href="#fun"/></svg>';
const txt=(x,y,s,t,w)=>`<text x="${x}" y="${y}" font-size="${s}" fill="#1f86cc" font-weight="${w||400}">${t}</text>`;
const icons=[
 ax+p('M2 4h7v6H2zM2 16h10v6H2z','W')+p('M9 4h10v6H9z','B')+p('M12 16h13v6H12z','G'),
 ax+p('M6 18h6v9H6zM18 16h6v11h-6z','W')+p('M6 9h6v9H6z','B')+p('M18 3h6v13h-6z','G'),
 p('M1 9h15v4H1zM1 20h19v5H1z','W')+p('M1 2h26v5H1z','B')+p('M1 14h11v5H1z','G')+ax,
 p('M9 11h5v16H9zM22 8h5v19h-5z','W')+p('M3 2h6v25H3z','B')+p('M15 16h6v11h-6z','G')+ax,
 ax+p('M2 4h5v6H2zM2 16h15v6H2z','W')+p('M7 4h18v6H7z','B')+p('M17 16h8v6h-8z','G'),
 ax+p('M6 22h6v5H6zM18 12h6v15h-6z','W')+p('M6 4h6v17H6z','B')+p('M18 3h6v9h-6z','G'),
 ax+p('M3 22L18 6l9 9','N')+p('M2 17l8-9 8 7 9-9','K'),
 p('M15 27V10l7-9 6 12v14z','G')+p('M1 20L10 2l10 18-5 7H1z','W')+p('M1 27v-6l5-3 3 3 8-9 10 15z','B'),
 p('M2 6l8 6 9-8 4 5h5v13l-8-6-9 8-9-8z','B')+ax,
 p('M3 4h25v17l-8-7-8 9-9-9z','B')+ax,
 p('M6 20h6v7H6zM18 13h6v14h-6z','W')+p('M6 4h6v15H6z','B')+p('M18 4h6v9h-6z','G')+ax+p('M2 25l8-10 8 6 9-10','K'),
 p('M12 3h6v24h-6z','W')+p('M6 14h6v13H6z','B')+p('M19 9h6v18h-6z','G')+ax+p('M2 25l8-10 8 6 9-10','K'),
 p('M4 18h22v6H4z','#e07b1c')+p('M4 5q4 0 10 5 6-5 12-6v5q-6 1-12 6-6-5-10-5z','G')+p('M4 12q3 0 6 5 4 5 8 0 3-5 8-5v6q-5 0-8 4-4 3-8 0-3-4-6-5z','B')+ax,
 p('M4 9h5v18H4zM20 3h5v24h-5z','W')+p('M11 9h4v8h-4z','G')+p('M16 2h3v14h-3z','#1166b0')+ax,
 p('M1 3h27v8H1zM4 11h20v7H4zM9 18h11v7H9z','B'),
 ax+p('M20 2h5v5h-5zM6 19h5v5H6z','#3b3a39')+p('M5 7h5v5H5zM12 12h5v5h-5zM20 18h5v5h-5z','#83beec'),
 '<circle cx="14" cy="14" r="13" fill="#fff" stroke="#3b3a39" stroke-width="1.800"/>'+p('M14 1a13 13 0 0 1 9 22l-9-9z','B'),
 '<circle cx="14" cy="14" r="10" fill="none" stroke="#83beec" stroke-width="6"/><circle cx="14" cy="14" r="13" fill="none" stroke="#1166b0" stroke-width="1.600"/>'+p('M1 14A13 13 0 0 1 14 1v7a6 6 0 0 0-6 6z','W')+'<circle cx="14" cy="14" r="6" fill="#fff" stroke="#3b3a39" stroke-width="1.800"/>',
 p('M1 1h27v26H1z','W')+p('M1 1h13v26H1z','B')+p('M1 14h13','N')+p('M14 9h14M20 9v18M20 17h8','K'),
 '<circle cx="15" cy="12" r="9" fill="#fff" stroke="#3b3a39" stroke-width="1.600"/>'+p('M9 7l5-3 1 5-4 4zM18 5l4 4-2 2zM14 13l6 2-3 5-3-3z','#3f9b54')+p('M10 1Q2 5 4 14t11 9q5 0 8-3M15 23v4M5 27h20','K'),
 p('M11 3l4 2 12-2v10l-5 4v6l-4 3-5-2-4-3-3-1-2-6-4-5z','G')+p('M1 2h10l2 8-6 3-6-4zM15 14l12-1-2 7-6 4-5-2z','B'),
 p('M19 0L2 26l12-7z','#42a5d6')+p('M19 0l-5 19 12 9z','#1675c4'),
 p('M1 19A13 13 0 0 1 8 7l3 6a7 7 0 0 0-3 6z','W')+p('M9 7a13 13 0 0 1 18 12h-6a7 7 0 0 0-9-7z','B')+p('M20 11l-4 9q-3 1-4-2z','#3b3a39'),
 p('M1 4h26v20H1z','W')+txt(4,16.500,13,'123')+p('M4 20h20','g'),
 p('M1 1h26v26H1z','W')+p('M6 4v20M9 12h8M9 23h8','g')+p('M9 6h15v3H9zM9 16h15v3H9z','#1675c4'),
 p('M1 3h26v21H1z','W')+p('M4 15l4.500-7 4.500 7z','#3f9b54')+p('M15 8h9l-4.500 7z','#d93636')+p('M4 19h20','g'),
 p('M1 1h26v26H1z','W')+p('M1 1h26v4H1z','#a19f9d')+p('M6 10h5v5H6zM6 17h5v5H6z','g')+fun,
 p('M1 1h26v26H1z','W')+p('M1 1h26v4H1z','#a19f9d')+p('M1 6h26M1 13h26M1 20h26M10 6v21M18 6v21','g')+p('M1 1h26v26H1z','K'),
 p('M1 1h26v26H1z','W')+p('M1 1h26v4H1z','#a19f9d')+p('M18 6h9v21H1v-7h17z','B')+p('M1 6h26M1 13h26M1 20h26M10 6v21M18 6v21','g')+p('M1 1h26v26H1z','K'),
 txt(7,22,23,'R',700),
 txt(-1,21,23,'Py',700),
 ax+p('M2 6h17','N')+p('M2 13h13M2 19h7','g')+'<circle cx="22" cy="6" r="3" fill="#83beec" stroke="#1166b0" stroke-width="1.600"/><circle cx="16.500" cy="13" r="2" fill="#fff" stroke="#8a8886"/><circle cx="10.500" cy="19" r="2" fill="#fff" stroke="#8a8886"/>',
 p('M11 13h6M14 4v19M14 4h4M14 23h4','K')+p('M1 10h10v6H1zM18 1h9v6h-9zM18 10h9v6h-9zM18 19h9v6h-9z','B'),
 '<path d="M1 2h26v17H13l-6 6v-6H1z" fill="#fff" stroke="#1166b0" stroke-width="1.800"/>',
 p('M5 1h12l8 8v18H5z','W')+p('M17 1v8h8','K')+p('M12 14h9M10 18h8','N')+'<circle cx="6" cy="11" r="2.800" fill="#1675c4"/>',
 p('M7 4H1q0 9 7 10M21 4h6q0 9-7 10','K')+p('M7 1h14v9q0 7-5 9v4h-4v-4q-5-2-5-9z','W')+p('M7 1h14v4H7zM7 24h14v3H7z','B'),
 p('M3 1h13l8 8v18H3z','W')+p('M16 1v8h8','K')+p('M6 17h4v7H6zM12 20h3v4h-3zM17 13h4v11h-4z','#3b3a39'),
 p('M6 4h21v20H1v-6','W')+txt(5,19,12.500,'123')+p('M4 22h20','g')+bolt,
 p('M15 2h10v9H15zM1 16h10v10H1z','g')+p('M6 3h6v10H6z','#1675c4')+bolt+fun,
 p('M8 2h19v10M1 16v10h13','K')+txt(7,20,18,'A')+bolt+fun,
 p('M8 2h19v10M1 16v10h13','K')+p('M13 9h10M6 16h3v3H6zM12 17h3','g')+bolt+fun,
 p('M9 1h18v7l-5 3v5l-5 3v4l-3 4H1V16z','B')+p('M22 2h5l-1 4-7 4v6l-7 3-1 6-7 1 9-10V8z','#fff')+p('M0 1h9v8l-4.500 7L0 10z','#e07000')+'<circle cx="4.500" cy="5" r="2" fill="#fff"/><circle cx="24" cy="23.500" r="4.200" fill="#e07000"/><circle cx="26.500" cy="16" r="2.400" fill="#e07000"/>',
 '<path d="M1 14L13 2h4l11 12-11 12h-4zM10 5l9 9-9 9M19 3l-8 9 9 11M16 14l5-5M16 14l5 5" fill="#fff" stroke="#8f3a9c" stroke-width="1.500"/>',
 '<path d="M1 3h18l8 10-8 11H1l8-11zM9 13l10-10M3 24L21 5M11 24L25 9" fill="#fff" stroke="#0f7fd8" stroke-width="1.700"/>',
 '<circle cx="4" cy="11" r="1.500"/><circle cx="13" cy="11" r="1.500"/><circle cx="22" cy="11" r="1.500"/>'
];
document.getElementById('icons').innerHTML=icons.map((s,i)=>`<div class="vcell${i==6?' sel':''}"><svg width="28" height="28" viewBox="0 0 28 28" overflow="visible">${s}</svg></div>`).join('');
</script>
</body>
</html>
